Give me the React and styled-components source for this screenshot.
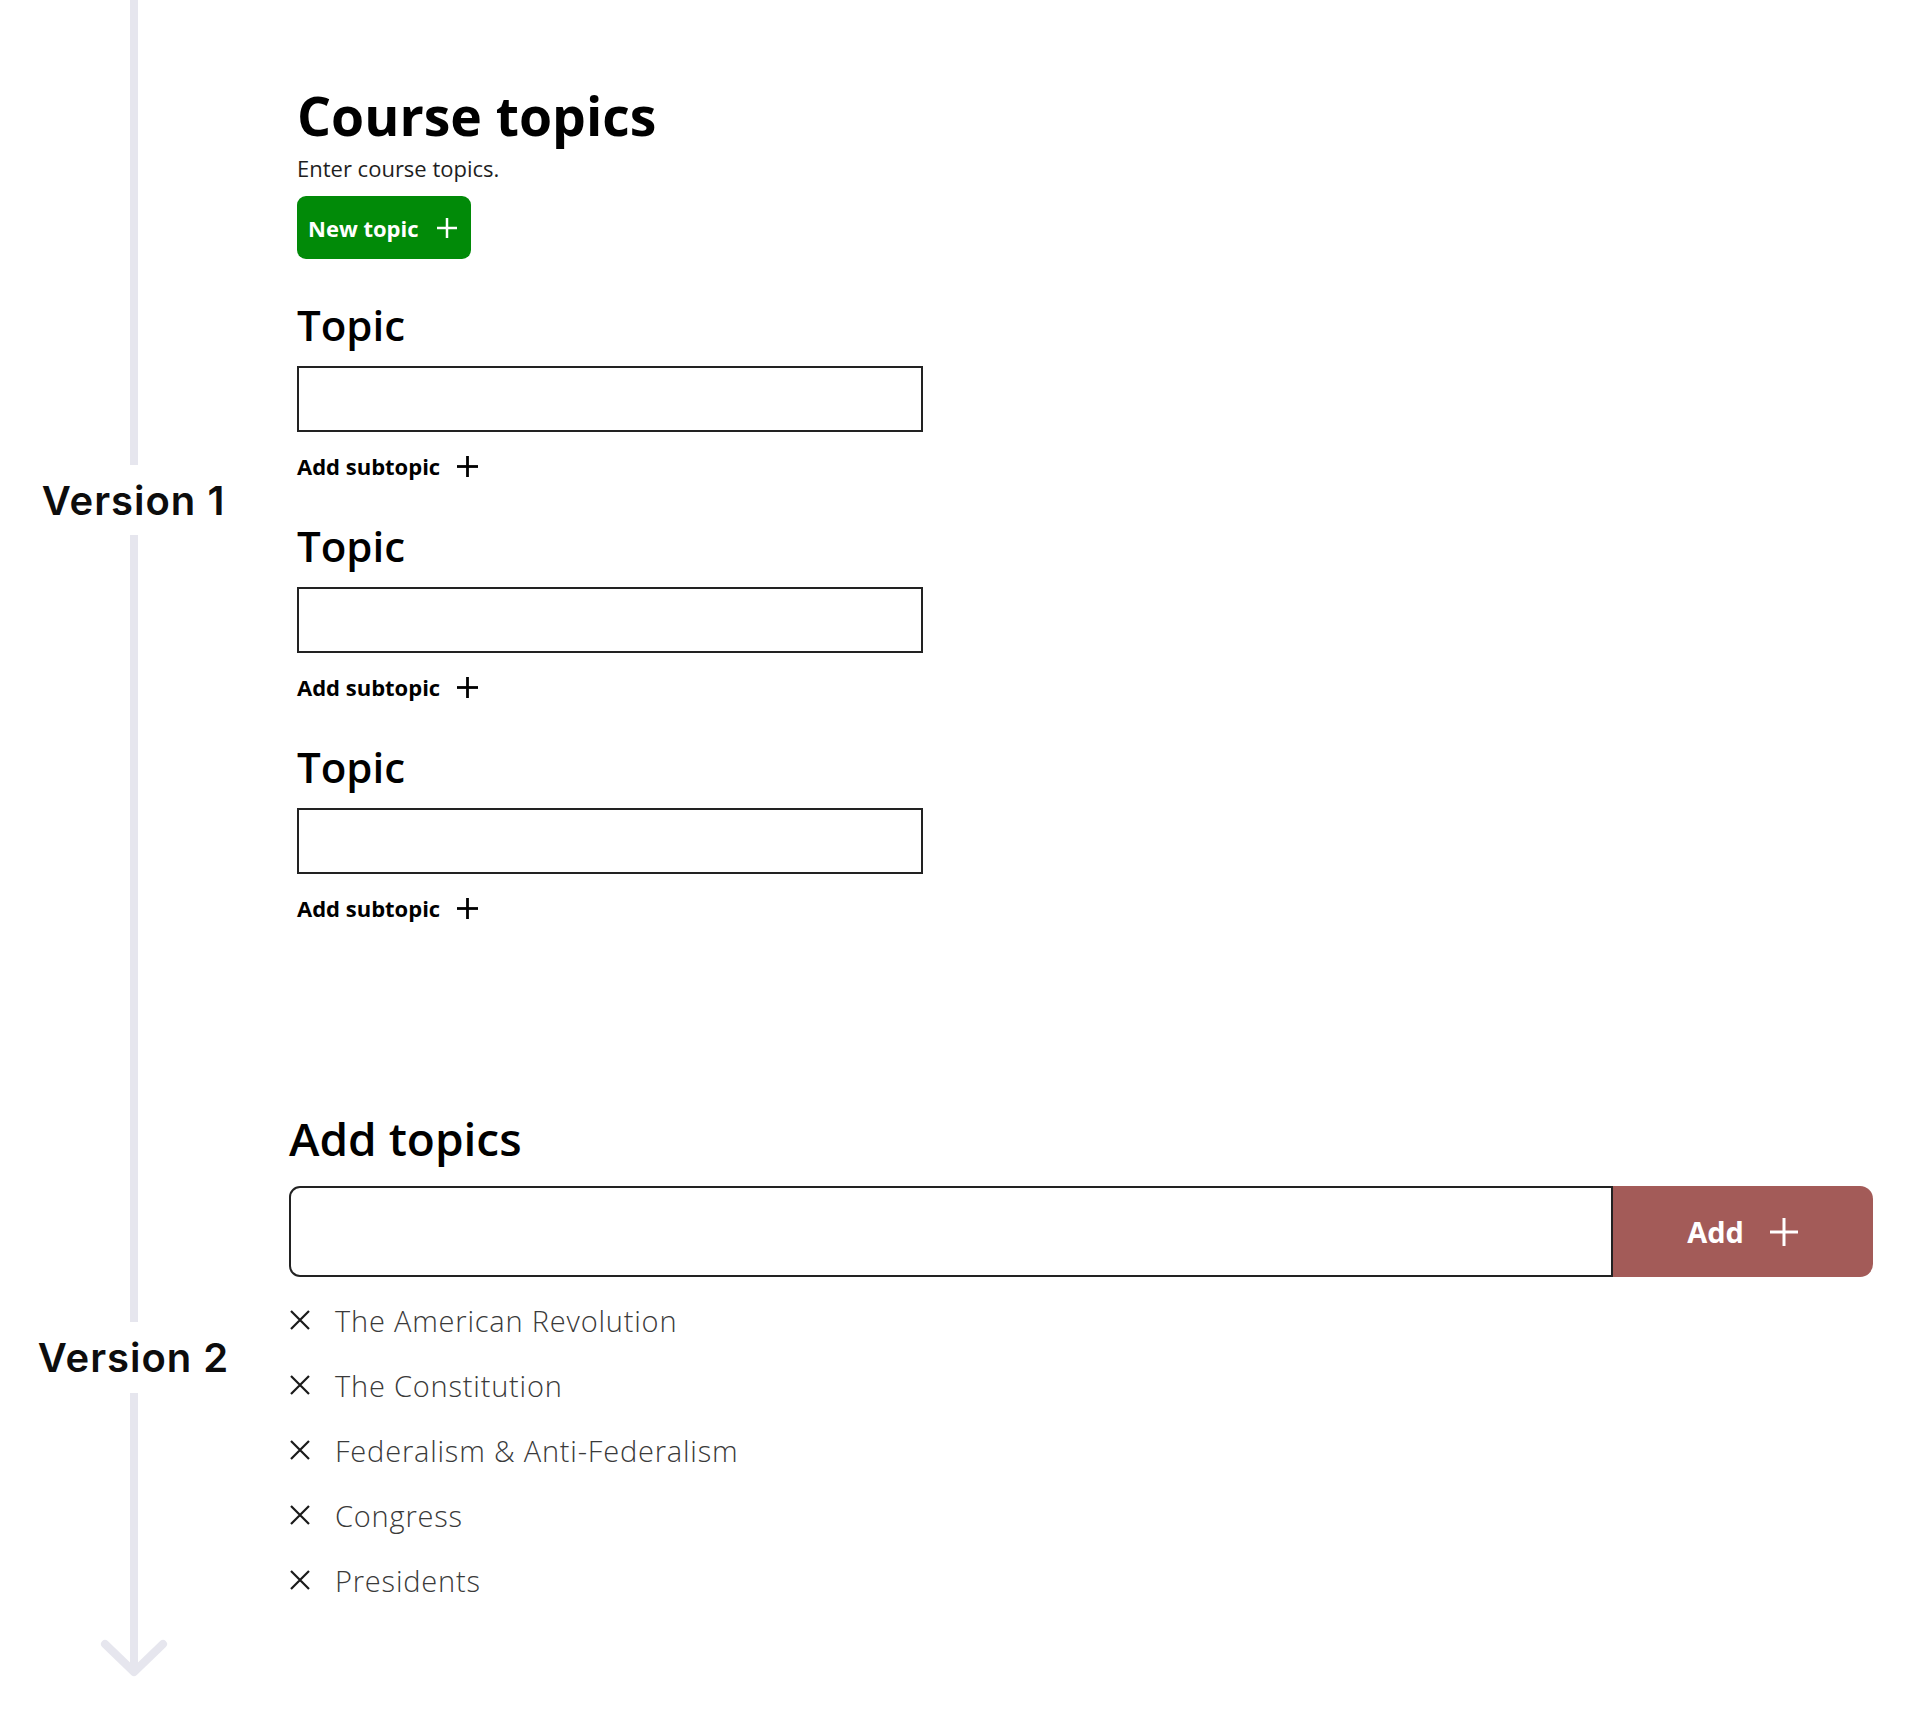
import React from "react";
import styled, { createGlobalStyle } from "styled-components";

const RAIL_COLOR = "#e6e6ee";
const GREEN = "#018a08";
const BRICK = "#a35b58";

const GlobalStyle = createGlobalStyle`
  body {
    margin: 0;
    background: #fff;
    font-family: "Open Sans", "Noto Sans", sans-serif;
    color: #000;
  }
`;

const Page = styled.div`
  display: flex;
  width: 1920px;
  min-height: 1727px;
  box-sizing: border-box;
`;

const Rail = styled.aside`
  width: 267px;
  flex-shrink: 0;
  display: flex;
  flex-direction: column;
  align-items: center;
`;

const RailLine = styled.div`
  width: 8px;
  height: ${(p) => p.$h}px;
  background: ${RAIL_COLOR};
`;

const RailLabel = styled.div`
  height: ${(p) => p.$h}px;
  display: flex;
  align-items: center;
  font-family: "Inter", "Lato", sans-serif;
  font-weight: 600;
  font-size: 40px;
  letter-spacing: 1px;
  color: #0d0d0d;
  white-space: nowrap;
`;

const Main = styled.main`
  flex: 1;
  display: flex;
  flex-direction: column;
  padding: 89px 47px 0 0;
`;

const Section = styled.section`
  display: flex;
  flex-direction: column;
  padding-left: ${(p) => p.$indent}px;
  margin-top: ${(p) => p.$top || 0}px;
`;

const Title = styled.h1`
  margin: 0;
  font-size: 53.5px;
  font-weight: 700;
  line-height: 54px;
`;

const Subtitle = styled.p`
  margin: 12px 0 0;
  font-size: 22px;
  line-height: 1.2;
  color: #1e1e1e;
`;

const NewTopicButton = styled.button`
  margin-top: 15px;
  align-self: flex-start;
  width: 174px;
  height: 63px;
  padding: 0 13px 0 11px;
  display: flex;
  align-items: center;
  justify-content: space-between;
  border: none;
  border-radius: 9px;
  background: ${GREEN};
  color: #fff;
  font-family: "Open Sans", "Noto Sans", sans-serif;
  font-size: 22px;
  font-weight: 700;
  box-sizing: border-box;
`;

const TopicList = styled.div`
  margin-top: 45px;
  display: flex;
  flex-direction: column;
  gap: 48px;
`;

const TopicBlock = styled.div`
  display: flex;
  flex-direction: column;
`;

const TopicLabel = styled.label`
  font-size: 42px;
  font-weight: 600;
  line-height: 1;
`;

const TopicInput = styled.input`
  margin-top: 20px;
  width: 626px;
  height: 66px;
  box-sizing: border-box;
  border: 2px solid #222;
  background: #fff;
  outline: none;
`;

const SubtopicButton = styled.button`
  margin-top: 23px;
  align-self: flex-start;
  padding: 0;
  display: flex;
  align-items: center;
  gap: 16px;
  border: none;
  background: none;
  color: #000;
  font-family: "Open Sans", "Noto Sans", sans-serif;
  font-size: 22px;
  font-weight: 700;
  line-height: 22px;
  height: 22px;
`;

const Heading = styled.h2`
  margin: 0;
  font-size: 46px;
  font-weight: 600;
  line-height: 45px;
`;

const InputRow = styled.div`
  margin-top: 25px;
  display: flex;
  height: 91px;
`;

const AddInput = styled.input`
  flex: 1;
  height: 100%;
  box-sizing: border-box;
  border: 2px solid #222;
  border-radius: 11px 0 0 11px;
  background: #fff;
  outline: none;
`;

const AddButton = styled.button`
  width: 260px;
  height: 100%;
  display: flex;
  align-items: center;
  justify-content: center;
  gap: 25px;
  border: none;
  border-radius: 0 13px 13px 0;
  background: ${BRICK};
  color: #fff;
  font-family: "Open Sans", "Noto Sans", sans-serif;
  font-size: 29px;
  font-weight: 700;
`;

const TagList = styled.ul`
  list-style: none;
  margin: 23px 0 0;
  padding: 0;
  display: flex;
  flex-direction: column;
  gap: 25px;
`;

const Tag = styled.li`
  height: 40px;
  display: flex;
  align-items: center;
  gap: 24px;
  font-size: 29px;
  font-weight: 300;
  letter-spacing: 0.8px;
  color: #3a3a3a;
`;

function Plus({ size, stroke = 2.5, color }) {
  const h = size / 2;
  return (
    <svg width={size} height={size} viewBox={`0 0 ${size} ${size}`}>
      <line x1={h} y1="1" x2={h} y2={size - 1} stroke={color} strokeWidth={stroke} />
      <line x1="1" y1={h} x2={size - 1} y2={h} stroke={color} strokeWidth={stroke} />
    </svg>
  );
}

function Cross() {
  return (
    <svg width="22" height="22" viewBox="0 0 22 22">
      <path d="M2 2 L20 20 M20 2 L2 20" stroke="#1a1a1a" strokeWidth="2.2" fill="none" />
    </svg>
  );
}

function RailArrow() {
  return (
    <svg width="80" height="285" viewBox="0 0 80 285">
      <line x1="40" y1="0" x2="40" y2="278" stroke={RAIL_COLOR} strokeWidth="8" />
      <polyline
        points="11,251 40,279 69,251"
        fill="none"
        stroke={RAIL_COLOR}
        strokeWidth="8"
        strokeLinecap="round"
        strokeLinejoin="round"
      />
    </svg>
  );
}

const topics = [
  "The American Revolution",
  "The Constitution",
  "Federalism & Anti-Federalism",
  "Congress",
  "Presidents",
];

export default function App() {
  return (
    <Page>
      <GlobalStyle />
      <Rail>
        <RailLine $h={465} />
        <RailLabel $h={70}>Version 1</RailLabel>
        <RailLine $h={787} />
        <RailLabel $h={71}>Version 2</RailLabel>
        <RailArrow />
      </Rail>
      <Main>
        <Section $indent={30}>
          <Title>Course topics</Title>
          <Subtitle>Enter course topics.</Subtitle>
          <NewTopicButton>
            New topic
            <Plus size={22} color="#fff" />
          </NewTopicButton>
          <TopicList>
            {[0, 1, 2].map((i) => (
              <TopicBlock key={i}>
                <TopicLabel>Topic</TopicLabel>
                <TopicInput type="text" />
                <SubtopicButton>
                  Add subtopic
                  <Plus size={23} stroke={2.8} color="#000" />
                </SubtopicButton>
              </TopicBlock>
            ))}
          </TopicList>
        </Section>
        <Section $indent={22} $top={197}>
          <Heading>Add topics</Heading>
          <InputRow>
            <AddInput type="text" />
            <AddButton>
              Add
              <Plus size={30} stroke={3} color="#fff" />
            </AddButton>
          </InputRow>
          <TagList>
            {topics.map((t) => (
              <Tag key={t}>
                <Cross />
                {t}
              </Tag>
            ))}
          </TagList>
        </Section>
      </Main>
    </Page>
  );
}
